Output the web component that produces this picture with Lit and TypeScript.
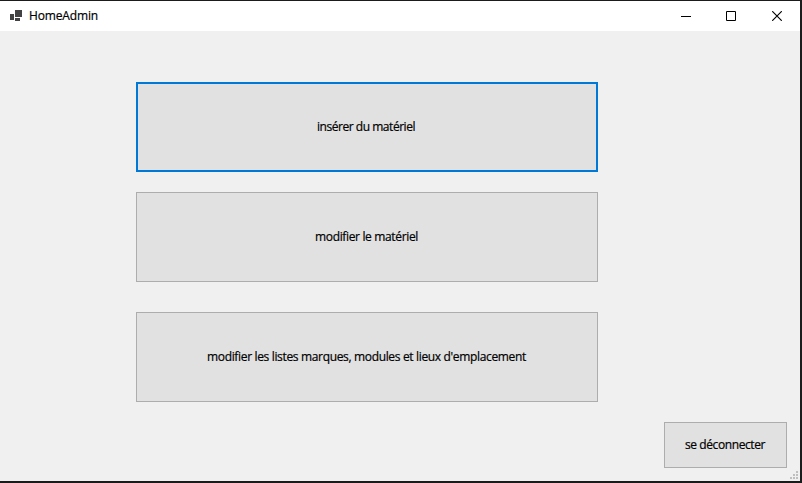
import { LitElement, html, css } from "lit";
import { customElement, property } from "lit/decorators.js";

@customElement("form-button")
class FormButton extends LitElement {
  @property() label = "";

  static styles = css`
    :host {
      display: block;
    }
    .button {
      display: block;
      width: 100%;
      height: 100%;
      box-sizing: border-box;
      margin: 0;
      padding: 0 1px 0 0;
      border: 1px solid #adadad;
      border-radius: 0;
      background: #e1e1e1;
      color: #000;
      font: inherit;
      letter-spacing: inherit;
      line-height: 16px;
      white-space: nowrap;
      outline: none;
    }
    :host([focused]) .button {
      padding-right: 2px;
      border: 2px solid #0078d7;
    }
  `;

  render() {
    return html`<button class="button">${this.label}</button>`;
  }
}

@customElement("app-root")
class AppRoot extends LitElement {
  static styles = css`
    :host {
      display: flex;
      box-sizing: border-box;
      width: 802px;
      height: 483px;
      border: solid #1b1b1c;
      border-width: 1px 2px 2px 0;
      font: 12px "Open Sans", "Noto Sans", sans-serif;
      -webkit-text-stroke: 0.2px #000;
      color: #000;
      overflow: hidden;
    }
    .window {
      flex: 1;
      display: flex;
      flex-direction: column;
      background: #f0f0f0;
      position: relative;
    }
    .titlebar {
      display: flex;
      align-items: center;
      height: 30px;
      background: #fff;
    }
    .logo {
      margin-left: 10px;
      width: 12px;
      height: 12px;
    }
    .title {
      flex: 1;
      margin-left: 7px;
      line-height: 16px;
      letter-spacing: -0.15px;
    }
    .control {
      display: flex;
      justify-content: center;
      width: 46px;
    }
    .control.minimize {
      width: 44px;
    }
    svg {
      display: block;
    }
    .actions {
      display: flex;
      flex-direction: column;
      width: 462px;
      margin: 51px 0 0 136px;
    }
    .action {
      height: 90px;
    }
    .first {
      letter-spacing: -0.46px;
    }
    .second {
      margin-top: 20px;
      letter-spacing: -0.35px;
    }
    .third {
      margin-top: 30px;
      letter-spacing: -0.34px;
    }
    .logout {
      align-self: flex-end;
      width: 123px;
      height: 46px;
      margin: 20px 13px 0 0;
      letter-spacing: -0.4px;
    }
    .grip {
      position: absolute;
      right: 2px;
      bottom: 2px;
    }
  `;

  render() {
    return html`
      <div class="window">
        <div class="titlebar">
          <svg class="logo" width="12" height="12" fill="#424242" shape-rendering="crispEdges">
            <path d="M5 0h7v7H5zM0 4h4v6H0zM5 8h5v3H5z" />
          </svg>
          <span class="title">HomeAdmin</span>
          <span class="control minimize">
            <svg width="10" height="10" shape-rendering="crispEdges"><path d="M0 5h10v1H0z" /></svg>
          </span>
          <span class="control">
            <svg width="10" height="10" fill="none" stroke="#000"><path d="M.5 .5h9v9h-9z" /></svg>
          </span>
          <span class="control">
            <svg width="10" height="10" fill="none" stroke="#000" stroke-width="1.15">
              <path d="M.2 .2l9.6 9.6M9.8 .2L.2 9.8" />
            </svg>
          </span>
        </div>
        <div class="actions">
          <form-button class="action first" focused label="insérer du matériel"></form-button>
          <form-button class="action second" label="modifier le matériel"></form-button>
          <form-button
            class="action third"
            label="modifier les listes marques, modules et lieux d'emplacement"
          ></form-button>
        </div>
        <form-button class="logout" label="se déconnecter"></form-button>
        <svg class="grip" width="8" height="8" fill="#bfbfbf" shape-rendering="crispEdges">
          <path d="M6 0h2v2H6zM3 3h2v2H3zM6 3h2v2H6zM0 6h2v2H0zM3 6h2v2H3zM6 6h2v2H6z" />
        </svg>
      </div>
    `;
  }
}
